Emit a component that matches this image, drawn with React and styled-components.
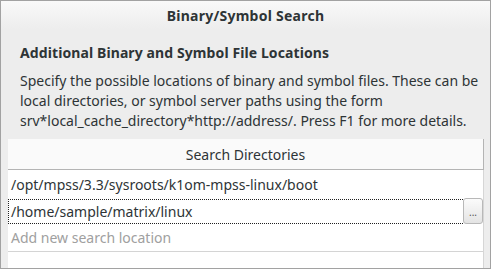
import React from "react";
import styled, { createGlobalStyle } from "styled-components";

const Global = createGlobalStyle`
  html, body { margin: 0; padding: 0; background: #ededed; }
  * { box-sizing: border-box; }
`;

const Window = styled.div`
  width: 491px;
  height: 269px;
  border: 1px solid #a2a2a2;
  background: #ededed;
  overflow: hidden;
  display: flex;
  flex-direction: column;
  font-family: "Noto Sans", "Open Sans", sans-serif;
  color: #2e3436;
`;

const TitleBar = styled.div`
  height: 28px;
  flex: none;
  display: flex;
  align-items: center;
  justify-content: center;
  background: linear-gradient(#f9f9f9, #ededed);
  font-weight: bold;
  font-size: 14px;
  letter-spacing: 0.25px;
`;

const Body = styled.div`
  padding: 14px 0 0 19px;
  flex: none;
`;

const Heading = styled.div`
  font-weight: bold;
  font-size: 14px;
  letter-spacing: 0.1px;
  line-height: 20px;
`;

const Para = styled.p`
  margin: 8px 0 0;
  font-size: 14px;
  line-height: 20px;
  width: 462px;
`;

const Table = styled.div`
  margin: 8px 6px 0 7px;
  flex: 1;
  background: #ffffff;
  border-right: 1px solid #d6d6d6;
  display: flex;
  flex-direction: column;
`;

const Header = styled.div`
  height: 31px;
  flex: none;
  display: flex;
  align-items: center;
  justify-content: center;
  background: #fafafa;
  border-bottom: 1px solid #b4b4b4;
  margin-right: -1px;
  border-right: 1px solid #b4b4b4;
  font-size: 14px;
`;

const Row = styled.div`
  height: ${(p) => p.$h}px;
  flex: none;
  display: flex;
  align-items: center;
  padding-left: 3px;
  font-size: 14px;
  color: ${(p) => (p.$placeholder ? "#a0a0a0" : "#2e3436")};
  border-bottom: ${(p) => (p.$line ? "1px solid #d4d4d4" : "none")};
`;

const FocusRow = styled.div`
  height: 25px;
  flex: none;
  display: flex;
  align-items: center;
  font-size: 14px;
`;

const FocusText = styled.div`
  flex: 1;
  height: 100%;
  display: flex;
  align-items: center;
  padding-left: 2px;
  border: 1px dotted #202020;
  border-right: none;
`;

const BrowseButton = styled.button`
  width: 20px;
  height: 26px;
  margin-top: -1px;
  padding: 0 0 4px;
  border: 1px solid #b8b8b8;
  border-radius: 3px;
  background: linear-gradient(#fbfbfb, #e4e4e4);
  font-family: "Noto Sans", sans-serif;
  font-size: 10px;
  color: #555;
  display: flex;
  align-items: flex-end;
  justify-content: center;
  letter-spacing: 0;
`;

export default function App() {
  return (
    <>
      <Global />
      <Window>
        <TitleBar>Binary/Symbol Search</TitleBar>
        <Body>
          <Heading>Additional Binary and Symbol File Locations</Heading>
          <Para>
            Specify the possible locations of binary and symbol files. These can be
            local directories, or symbol server paths using the form
            srv*local_cache_directory*http://address/. Press F1 for more details.
          </Para>
        </Body>
        <Table>
          <Header>Search Directories</Header>
          <Row $h={29}>/opt/mpss/3.3/sysroots/k1om-mpss-linux/boot</Row>
          <FocusRow>
            <FocusText>/home/sample/matrix/linux</FocusText>
            <BrowseButton>...</BrowseButton>
          </FocusRow>
          <Row $h={28} $placeholder $line>Add new search location</Row>
        </Table>
      </Window>
    </>
  );
}
